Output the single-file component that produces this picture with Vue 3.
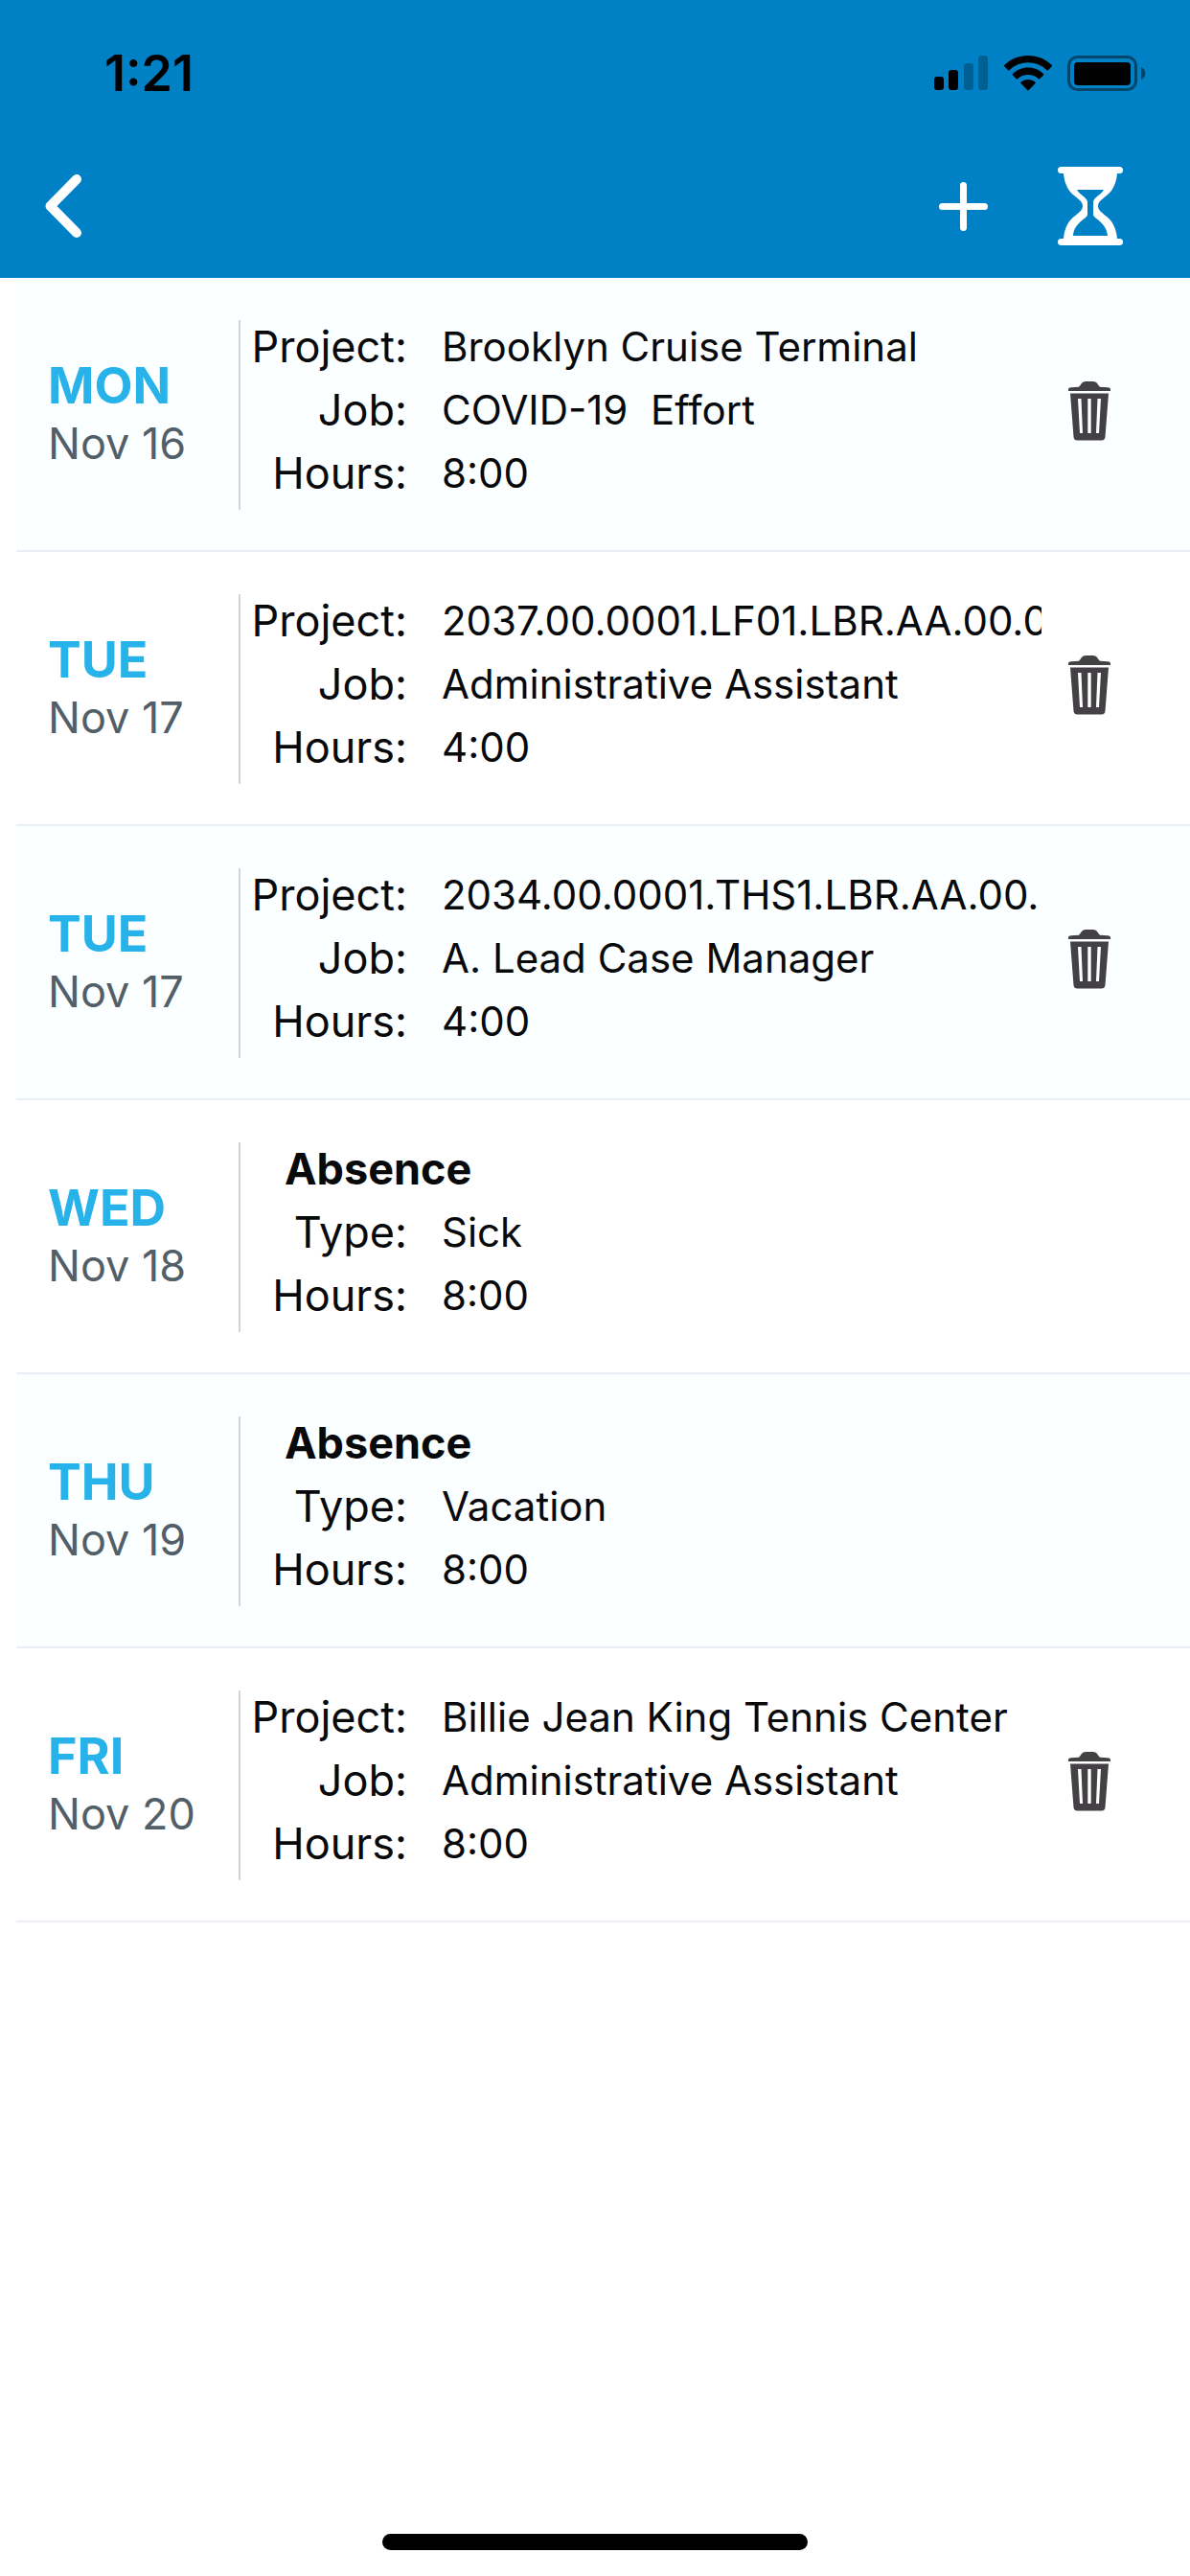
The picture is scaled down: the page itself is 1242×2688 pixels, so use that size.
<script setup>
const entries = [
  { day: 'MON', date: 'Nov 16', fields: [['Project:', 'Brooklyn Cruise Terminal'], ['Job:', 'COVID-19  Effort'], ['Hours:', '8:00']] },
  { day: 'TUE', date: 'Nov 17', fields: [['Project:', '2037.00.0001.LF01.LBR.AA.00.0'], ['Job:', 'Administrative Assistant'], ['Hours:', '4:00']] },
  { day: 'TUE', date: 'Nov 17', fields: [['Project:', '2034.00.0001.THS1.LBR.AA.00.'], ['Job:', 'A. Lead Case Manager'], ['Hours:', '4:00']] },
  { day: 'WED', date: 'Nov 18', absence: true, fields: [['Type:', 'Sick'], ['Hours:', '8:00']] },
  { day: 'THU', date: 'Nov 19', absence: true, fields: [['Type:', 'Vacation'], ['Hours:', '8:00']] },
  { day: 'FRI', date: 'Nov 20', fields: [['Project:', 'Billie Jean King Tennis Center'], ['Job:', 'Administrative Assistant'], ['Hours:', '8:00']] }
]
</script>

<template>
  <div class="screen">
    <header class="top">
      <div class="status">
        <span class="time">1:21</span>
        <span class="indicators">
          <svg width="57" height="37" viewBox="0 0 57 37" aria-hidden="true">
            <rect x="0" y="22" width="10" height="14" rx="3" />
            <rect x="15" y="15" width="10" height="21" rx="3" />
            <rect x="31" y="8" width="10" height="28" rx="3" fill-opacity=".25" />
            <rect x="46" y="0" width="10" height="36" rx="3" fill-opacity=".25" />
          </svg>
          <svg width="50" height="37" viewBox="0 0 50 37" aria-hidden="true">
            <path d="M25 0C34.600 0 43.400 3.700 49.700 9.900a1 1 0 0 1 0 1.400L46 15.200a1 1 0 0 1-1.400 0A28 28 0 0 0 5.400 15.200a1 1 0 0 1-1.400 0L.3 11.300a1 1 0 0 1 0-1.400C6.600 3.700 15.400 0 25 0z" />
            <path d="M25 12.600c6.200 0 11.800 2.400 16 6.300a1 1 0 0 1 0 1.500l-3.800 3.800a1 1 0 0 1-1.400 0 16 16 0 0 0-21.600 0 1 1 0 0 1-1.400 0L9 20.400a1 1 0 0 1 0-1.500c4.200-3.900 9.800-6.300 16-6.300z" />
            <path d="M25 25c2.900 0 5.500 1 7.400 2.700a1 1 0 0 1 0 1.400l-6.600 6.900a1.100 1.100 0 0 1-1.600 0l-6.600-6.900a1 1 0 0 1 0-1.400C19.500 26 22.100 25 25 25z" />
          </svg>
          <svg width="82" height="37" viewBox="0 0 82 37" aria-hidden="true">
            <rect x="1.500" y="1.500" width="70" height="34" rx="9" fill="none" stroke="#000" stroke-opacity=".45" stroke-width="3" />
            <rect x="7" y="7" width="59" height="24" rx="4" />
            <path d="M77 12c2.700 1 4.300 3.600 4.300 6.500S79.700 24 77 25z" fill-opacity=".45" />
          </svg>
        </span>
      </div>
      <nav class="bar">
        <button type="button" aria-label="Back">
          <svg width="40" height="68" viewBox="0 0 40 68" aria-hidden="true">
            <path d="M34 6 6.500 34 34 62" fill="none" stroke="#fff" stroke-width="10" stroke-linecap="round" stroke-linejoin="round" />
          </svg>
        </button>
        <span class="actions">
          <button type="button" aria-label="Add entry">
            <svg width="51" height="51" viewBox="0 0 51 51" aria-hidden="true">
              <path d="M25.500 3.500v44M3.500 25.500h44" fill="none" stroke="#fff" stroke-width="7" stroke-linecap="round" />
            </svg>
          </button>
          <button type="button" aria-label="Pending hours">
            <svg width="68" height="82" viewBox="0 0 68 82" aria-hidden="true">
              <path fill="#fff" fill-rule="evenodd" d="M3.500 0h61a3.500 3.500 0 0 1 0 7H62c-1 12-5.500 18.500-11 23-4.500 3.700-9 6.500-9 11s4.500 7.300 9 11c5.500 4.500 10 11 11 23h2.500a3.500 3.500 0 0 1 0 7h-61a3.500 3.500 0 0 1 0-7H6c1-12 5.500-18.500 11-23 4.500-3.700 9-6.500 9-11s-4.500-7.300-9-11C11.500 25.500 7 19 6 7H3.500a3.500 3.500 0 0 1 0-7zM20 24c3 5.500 11 8 11 13v13c0 4-14 8-15 22h36c-1-14-15-18-15-22V37c0-5 8-7.500 11-13z" />
            </svg>
          </button>
        </span>
      </nav>
    </header>

    <main>
      <ul class="list">
        <li v-for="(entry, i) in entries" :key="i" class="row">
          <div class="when">
            <span class="day">{{ entry.day }}</span>
            <span class="date">{{ entry.date }}</span>
          </div>
          <div class="details">
            <h2 v-if="entry.absence" class="heading">Absence</h2>
            <dl>
              <div v-for="[label, value] in entry.fields" :key="label" class="field">
                <dt>{{ label }}</dt>
                <dd>{{ value }}</dd>
              </div>
            </dl>
          </div>
          <button v-if="!entry.absence" type="button" class="trash" aria-label="Delete entry">
            <svg width="44" height="62" viewBox="0 0 44 62" aria-hidden="true">
              <path fill="#444145" d="M0 10V8.500C0 7 1.200 6.300 3 6.200l8-.4C13 4 14 0 18 0h8c4 0 5 4 7 5.800l8 .4c1.800.1 3 .8 3 2.300V10z" />
              <path fill="#444145" fill-rule="evenodd" d="M2 12.500h40L38.500 58a4 4 0 0 1-4 3.500h-25a4 4 0 0 1-4-3.500zM10 18l2 36h3l-1.500-36zM20.300 18v36h3.400V18zM30.500 18 29 54h3l2-36z" />
            </svg>
          </button>
        </li>
      </ul>
    </main>

    <footer class="home"><span class="pill"></span></footer>
  </div>
</template>

<style>
body {
  margin: 0;
  background: #fff;
}
</style>

<style scoped>
.screen {
  display: flex;
  flex-direction: column;
  min-height: 100vh;
  background: #fff;
  color: #08090b;
  font-family: Inter, "Liberation Sans", sans-serif;
}
button {
  display: flex;
  padding: 0;
  border: 0;
  background: none;
}
svg {
  display: block;
}
.top {
  background: #0080c5;
}
.status {
  display: flex;
  align-items: center;
  justify-content: space-between;
  box-sizing: border-box;
  height: 140px;
  padding: 12px 46px 0 109px;
  color: #000;
}
.time {
  font-size: 52px;
  font-weight: 600;
}
.indicators {
  display: flex;
  gap: 16px;
}
.bar {
  display: flex;
  align-items: center;
  justify-content: space-between;
  height: 150px;
  padding: 0 70px 0 46px;
}
.actions {
  display: flex;
  align-items: center;
  gap: 73px;
}
.list {
  margin: 0 0 0 17px;
  padding: 0;
  list-style: none;
}
.row {
  display: flex;
  align-items: center;
  padding: 44px 83px 42px 33px;
  border-bottom: 2px solid #e9eff5;
}
.row:nth-child(odd) {
  background: #fbffff;
}
.when {
  display: flex;
  flex: 0 0 199px;
  flex-direction: column;
}
.day {
  color: #27b2ea;
  font-size: 52px;
  font-weight: 700;
  line-height: 60px;
}
.date {
  color: #525f69;
  font-size: 45px;
  line-height: 60px;
}
.details {
  flex: 1;
  min-width: 0;
  border-left: 2px solid #d3d3d8;
}
.heading {
  margin: 0 0 0 46px;
  padding-bottom: 10px;
  font-size: 45px;
  font-weight: 700;
  line-height: 56px;
}
dl {
  margin: 0;
}
.field {
  display: flex;
  padding-bottom: 10px;
  line-height: 56px;
}
dt {
  flex: 0 0 174px;
  font-size: 45px;
  text-align: right;
}
dd {
  flex: 0 1 626px;
  margin: 0 0 0 36px;
  overflow: hidden;
  font-size: 42px;
  white-space: pre;
}
.trash {
  margin-left: 27px;
  padding-bottom: 8px;
}
.home {
  display: flex;
  justify-content: center;
  margin-top: auto;
  padding: 24px 0 27px;
}
.pill {
  width: 444px;
  height: 17px;
  border-radius: 9px;
  background: #000;
}
</style>
